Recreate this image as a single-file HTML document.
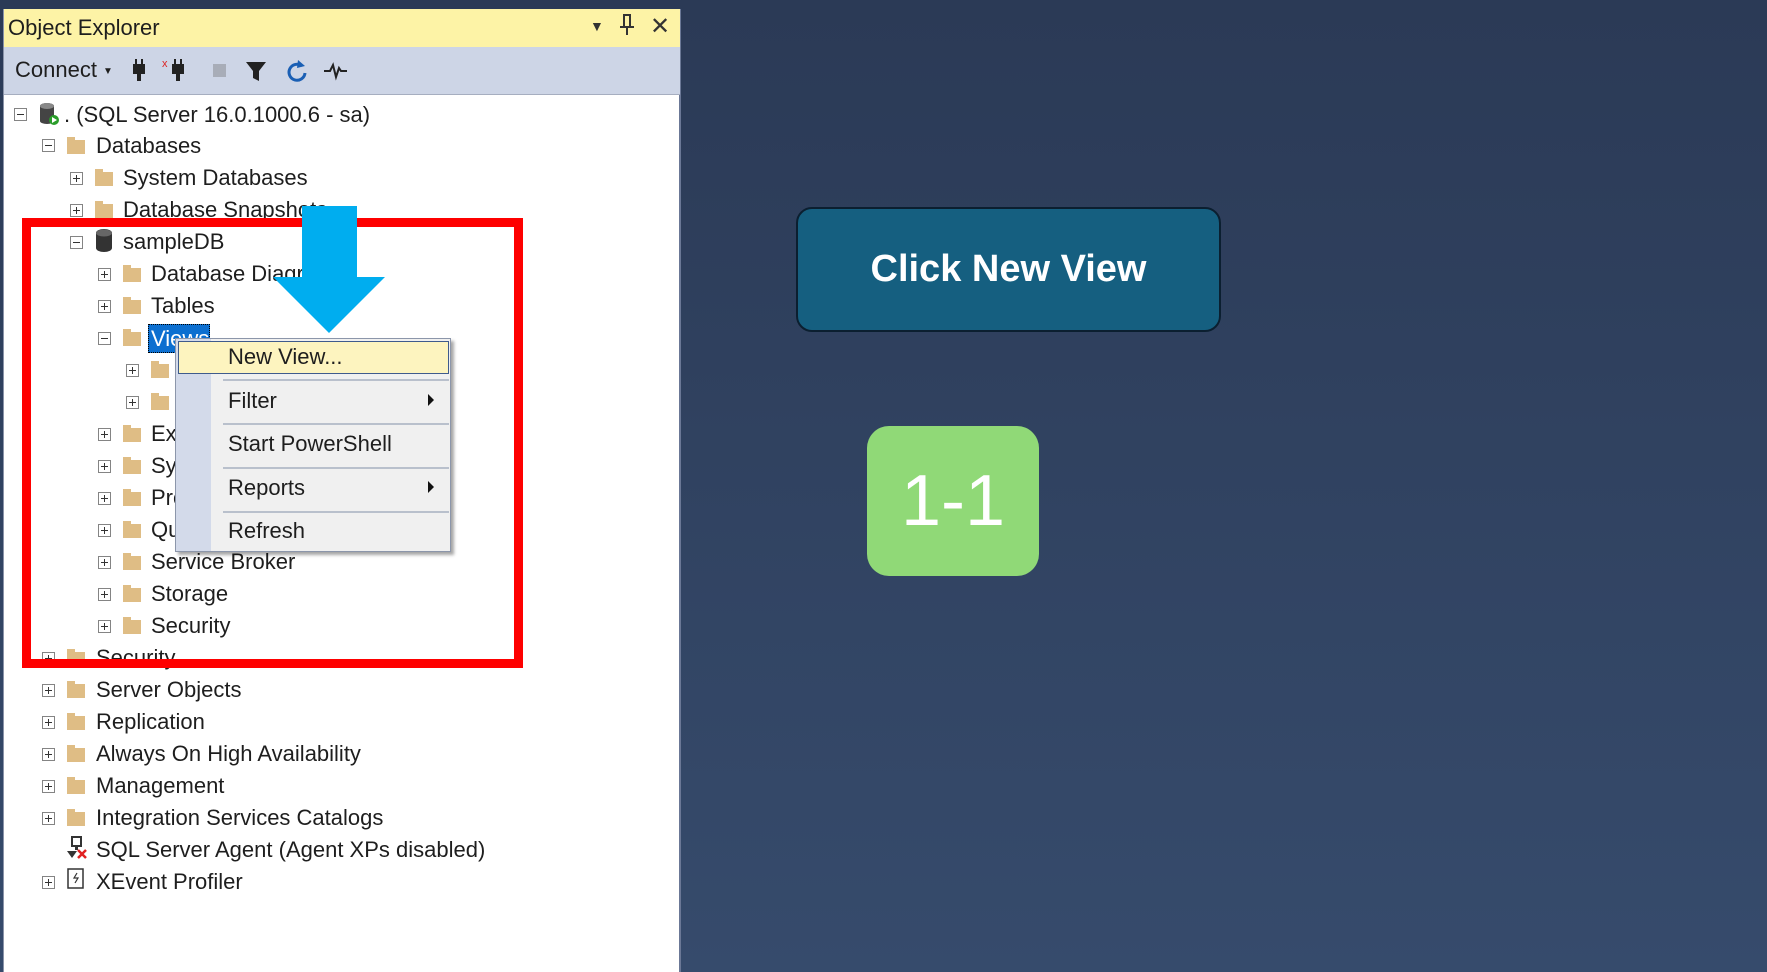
<!DOCTYPE html>
<html><head><meta charset="utf-8"><style>
*{margin:0;padding:0;box-sizing:border-box}
body{width:1767px;height:972px;overflow:hidden;background:linear-gradient(#2b3a56,#364b6c);font-family:"Liberation Sans","Noto Sans CJK KR",sans-serif;position:relative}
.a{position:absolute}
#panel{left:3px;top:9px;width:678px;height:963px;background:#fff;border-left:1px solid #8a93a8;border-right:2px solid #6b7896}
#title{left:4px;top:9px;width:676px;height:38px;background:#fdf3a6;font-size:22px;color:#1e1e1e;line-height:38px;padding-left:4px}
#tb{left:4px;top:47px;width:676px;height:48px;background:#cdd5e6;border-bottom:1px solid #a6aec0}
.t{font-size:22px;color:#1e1e1e;white-space:nowrap;line-height:32px;height:32px}
.ex{width:13px;height:13px;border:1px solid #848484;background:#fff}
.ex:before{content:"";position:absolute;left:2px;top:5px;width:7px;height:1px;background:#333}
.ex.p:after{content:"";position:absolute;left:5px;top:2px;width:1px;height:7px;background:#333}
.fd{width:18px;height:14px;background:#dfbd85}
.fd:before{content:"";position:absolute;left:0;top:-3px;width:8px;height:4px;background:#dfbd85}
.mi{font-size:22px;color:#1e1e1e;line-height:32px;left:228px}
.sep{left:223px;width:226px;height:2px;background:#b9c0cc}
</style></head><body>
<div class="a" id="panel"></div>
<div class="a" id="title">Object Explorer</div>
<div class="a" style="left:590px;top:18px;font-size:14px;color:#333">▼</div>
<div class="a" style="left:620px;top:14px;width:14px;height:22px">
<div class="a" style="left:3px;top:0;width:8px;height:12px;border:2px solid #333;border-bottom:none"></div>
<div class="a" style="left:0;top:12px;width:14px;height:2px;background:#333"></div>
<div class="a" style="left:6px;top:12px;width:2px;height:9px;background:#333"></div></div>
<div class="a" style="left:650px;top:12px;font-size:24px;color:#333">✕</div>
<div class="a" id="tb"></div>
<div class="a" style="left:15px;top:57px;font-size:22px;color:#1e1e1e">Connect</div>
<div class="a" style="left:103px;top:66px;font-size:10px;color:#1e1e1e">▼</div>
<svg class="a" style="left:128px;top:56px" width="230" height="30">
<g fill="#222"><rect x="7" y="3" width="2" height="6"/><rect x="13" y="3" width="2" height="6"/><rect x="5" y="8" width="12" height="10"/><rect x="9" y="17" width="4" height="8"/>
<rect x="46" y="3" width="2" height="6"/><rect x="52" y="3" width="2" height="6"/><rect x="44" y="8" width="12" height="10"/><rect x="48" y="17" width="4" height="8"/></g>
<text x="34" y="11" font-size="11" fill="#d22" font-family="Liberation Sans">x</text>
<rect x="85" y="8" width="13" height="13" fill="#a8adb8"/>
<path d="M118 6h20l-7 9v10l-6-3v-7z" fill="#222"/>
<path d="M174 10a8 8 0 1 0 3 7" stroke="#1a5fb4" stroke-width="3" fill="none"/><path d="M170 4l7 6-8 2z" fill="#1a5fb4"/>
<path d="M196 15h6l3-6 3 12 3-9 2 3h6" stroke="#222" stroke-width="2" fill="none"/>
</svg>

<div class="a ex" style="left:14px;top:108px"></div>
<svg class="a" style="left:38px;top:102px" width="22" height="24"><path d="M2 4a7 3 0 0 1 14 0v15a7 3 0 0 1-14 0z" fill="#444"/><ellipse cx="9" cy="4" rx="7" ry="3" fill="#888"/><circle cx="16" cy="18" r="5" fill="#2a9d2a"/><path d="M14 15l5 3-5 3z" fill="#fff"/></svg>
<div class="a t" style="left:64px;top:99px">. (SQL Server 16.0.1000.6 - sa)</div>

<div class="a ex" style="left:42px;top:139px"></div><div class="a fd" style="left:67px;top:140px"></div><div class="a t" style="left:96px;top:130px">Databases</div>
<div class="a ex p" style="left:70px;top:172px"></div><div class="a fd" style="left:95px;top:172px"></div><div class="a t" style="left:123px;top:162px">System Databases</div>
<div class="a ex p" style="left:70px;top:204px"></div><div class="a fd" style="left:95px;top:204px"></div><div class="a t" style="left:123px;top:194px">Database Snapshots</div>
<div class="a ex" style="left:70px;top:236px"></div>
<svg class="a" style="left:94px;top:228px" width="20" height="26"><path d="M2 5a8 4 0 0 1 16 0v15a8 4 0 0 1-16 0z" fill="#333"/><ellipse cx="10" cy="5" rx="8" ry="3.5" fill="#666"/></svg>
<div class="a t" style="left:123px;top:226px">sampleDB</div>
<div class="a ex p" style="left:98px;top:268px"></div><div class="a fd" style="left:123px;top:268px"></div><div class="a t" style="left:151px;top:258px">Database Diagrams</div>
<div class="a ex p" style="left:98px;top:300px"></div><div class="a fd" style="left:123px;top:300px"></div><div class="a t" style="left:151px;top:290px">Tables</div>
<div class="a ex" style="left:98px;top:332px"></div><div class="a fd" style="left:123px;top:332px"></div>
<div class="a t" style="left:148px;top:324px;width:62px;height:29px;background:#0c6fd0;color:#fff;border:1px dotted #000;line-height:27px;padding-left:2px;overflow:hidden">Views</div>
<div class="a ex p" style="left:126px;top:364px"></div><div class="a fd" style="left:151px;top:364px"></div>
<div class="a ex p" style="left:126px;top:396px"></div><div class="a fd" style="left:151px;top:396px"></div>
<div class="a ex p" style="left:98px;top:428px"></div><div class="a fd" style="left:123px;top:428px"></div><div class="a t" style="left:151px;top:418px">External Resources</div>
<div class="a ex p" style="left:98px;top:460px"></div><div class="a fd" style="left:123px;top:460px"></div><div class="a t" style="left:151px;top:450px">Synonyms</div>
<div class="a ex p" style="left:98px;top:492px"></div><div class="a fd" style="left:123px;top:492px"></div><div class="a t" style="left:151px;top:482px">Programmability</div>
<div class="a ex p" style="left:98px;top:524px"></div><div class="a fd" style="left:123px;top:524px"></div><div class="a t" style="left:151px;top:514px">Query Store</div>
<div class="a ex p" style="left:98px;top:556px"></div><div class="a fd" style="left:123px;top:556px"></div><div class="a t" style="left:151px;top:546px">Service Broker</div>
<div class="a ex p" style="left:98px;top:588px"></div><div class="a fd" style="left:123px;top:588px"></div><div class="a t" style="left:151px;top:578px">Storage</div>
<div class="a ex p" style="left:98px;top:620px"></div><div class="a fd" style="left:123px;top:620px"></div><div class="a t" style="left:151px;top:610px">Security</div>
<div class="a ex p" style="left:42px;top:652px"></div><div class="a fd" style="left:67px;top:652px"></div><div class="a t" style="left:96px;top:642px">Security</div>
<div class="a ex p" style="left:42px;top:684px"></div><div class="a fd" style="left:67px;top:684px"></div><div class="a t" style="left:96px;top:674px">Server Objects</div>
<div class="a ex p" style="left:42px;top:716px"></div><div class="a fd" style="left:67px;top:716px"></div><div class="a t" style="left:96px;top:706px">Replication</div>
<div class="a ex p" style="left:42px;top:748px"></div><div class="a fd" style="left:67px;top:748px"></div><div class="a t" style="left:96px;top:738px">Always On High Availability</div>
<div class="a ex p" style="left:42px;top:780px"></div><div class="a fd" style="left:67px;top:780px"></div><div class="a t" style="left:96px;top:770px">Management</div>
<div class="a ex p" style="left:42px;top:812px"></div><div class="a fd" style="left:67px;top:812px"></div><div class="a t" style="left:96px;top:802px">Integration Services Catalogs</div>
<svg class="a" style="left:66px;top:836px" width="22" height="24"><rect x="6" y="1" width="9" height="9" fill="none" stroke="#333" stroke-width="2"/><rect x="9" y="10" width="3" height="4" fill="#333"/><path d="M1 15h10l-5 7z" fill="#333"/><path d="M12 14l8 8M20 14l-8 8" stroke="#e02020" stroke-width="2.5"/></svg>
<div class="a t" style="left:96px;top:834px">SQL Server Agent (Agent XPs disabled)</div>
<div class="a ex p" style="left:42px;top:876px"></div>
<svg class="a" style="left:67px;top:868px" width="18" height="22"><rect x="1" y="1" width="15" height="19" fill="#fff" stroke="#333" stroke-width="1.5"/><path d="M10 5l-3 5h4l-3 5" stroke="#333" stroke-width="1.2" fill="none"/></svg>
<div class="a t" style="left:96px;top:866px">XEvent Profiler</div>

<div class="a" style="left:22px;top:218px;width:501px;height:450px;border:9px solid #fe0000"></div>
<div class="a" style="left:175px;top:338px;width:276px;height:214px;background:#f0f0f0;border:1px solid #8c96aa;box-shadow:3px 3px 3px rgba(0,0,0,.35)"></div>
<div class="a" style="left:176px;top:339px;width:35px;height:212px;background:#d3daea"></div>
<div class="a" style="left:178px;top:341px;width:271px;height:33px;background:#fdf4bf;border:1px solid #3f5b8c"></div>
<div class="a mi" style="top:341px">New View...</div>
<div class="a sep" style="top:379px"></div>
<div class="a mi" style="top:385px">Filter</div><div class="a" style="left:428px;top:394px;width:0;height:0;border-left:6px solid #111;border-top:6px solid transparent;border-bottom:6px solid transparent"></div>
<div class="a sep" style="top:423px"></div>
<div class="a mi" style="top:428px">Start PowerShell</div>
<div class="a sep" style="top:467px"></div>
<div class="a mi" style="top:472px">Reports</div><div class="a" style="left:428px;top:481px;width:0;height:0;border-left:6px solid #111;border-top:6px solid transparent;border-bottom:6px solid transparent"></div>
<div class="a sep" style="top:511px"></div>
<div class="a mi" style="top:515px">Refresh</div>
<svg class="a" style="left:270px;top:205px" width="120" height="130"><path d="M32 1h55v71h28l-56 56-56-56h29z" fill="#00adef"/></svg>

<div class="a" style="left:796px;top:207px;width:425px;height:125px;background:#155f80;border:2px solid #0b1f30;border-radius:16px;color:#fff;font-size:38px;font-weight:bold;text-align:center;line-height:121px">Click New View</div>
<div class="a" style="left:867px;top:426px;width:172px;height:150px;background:#90d977;border-radius:22px;color:#fff;font-size:72px;text-align:center;line-height:150px">1-1</div>
</body></html>
